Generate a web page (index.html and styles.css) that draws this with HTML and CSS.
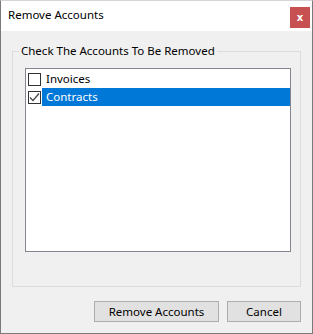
FILE: index.html
```html
<!DOCTYPE html>
<html lang="en">
<head>
    <meta charset="UTF-8">
    <meta name="viewport" content="width=device-width, initial-scale=1.0">
    <title>Remove Accounts</title>
    <link rel="stylesheet" href="styles.css">
</head>
<body>
    <div class="window">
        <div class="titlebar">
            <span class="title">Remove Accounts</span>
            <button class="close" title="Close">x</button>
        </div>
        <div class="content">
            <fieldset class="group">
                <legend>Check The Accounts To Be Removed</legend>
                <ul class="listbox">
                    <li class="item">
                        <span class="check"></span>
                        <span class="label">Invoices</span>
                    </li>
                    <li class="item selected">
                        <span class="check checked">
                            <svg width="11" height="11" viewBox="0 0 11 11"><path d="M1 5.5 L4 8.5 L10 1.5" fill="none" stroke="#444" stroke-width="1.2"/></svg>
                        </span>
                        <span class="label">Contracts</span>
                    </li>
                </ul>
            </fieldset>
            <div class="buttons">
                <button class="btn">Remove Accounts</button>
                <button class="btn cancel">Cancel</button>
            </div>
        </div>
    </div>
</body>
</html>
```

FILE: styles.css
```css
body {
    margin: 0;
    font-family: "Noto Sans", "Open Sans", sans-serif;
    font-size: 11.5px;
    color: #000;
}
.window {
    width: 313px;
    height: 334px;
    box-sizing: border-box;
    border: 1px solid #7a7a7a;
    border-top-color: #d4d4d4;
    background: #f0f0f0;
}
.titlebar {
    height: 30px;
    background: #fff;
    display: flex;
    align-items: flex-start;
    justify-content: space-between;
}
.title {
    margin: 5px 0 0 7px;
    line-height: 18px;
}
.close {
    margin: 6px 2px 0 0;
    width: 20px;
    height: 21px;
    border: none;
    padding: 0;
    background: #c75050;
    color: #fff;
    font-family: "DejaVu Sans", sans-serif;
    font-weight: bold;
    font-size: 10px;
    line-height: 19px;
}
.content {
    padding: 0 11px;
}
.group {
    margin: 12px 0 0 0;
    padding: 0 9px 34px 0;
    border: 1px solid #dcdcdc;
    min-width: 0;
}
.group legend {
    margin-left: 6px;
    padding: 0 2px;
    line-height: 16px;
}
.listbox {
    list-style: none;
    margin: 9px 0 0 12px;
    padding: 1px 0 0 0;
    height: 181px;
    border: 1px solid #828790;
    background: #fff;
}
.item {
    display: flex;
    align-items: center;
    height: 18px;
}
.check {
    width: 11px;
    height: 11px;
    margin: 0 1px 0 2px;
    border: 1px solid #333;
    background: #fff;
    display: flex;
    align-items: center;
    justify-content: center;
}
.label {
    flex: 1;
    height: 18px;
    line-height: 17px;
    padding-left: 4px;
}
.selected .label {
    background: #0078d7;
    color: #fff;
}
.buttons {
    display: flex;
    justify-content: flex-end;
    gap: 8px;
    margin-top: 14px;
}
.btn {
    height: 21px;
    width: 125px;
    padding: 0;
    background: #e1e1e1;
    border: 1px solid #adadad;
    font-family: "Noto Sans", "Open Sans", sans-serif;
    font-size: 11.5px;
    color: #000;
}
.btn.cancel {
    width: 74px;
}
```
